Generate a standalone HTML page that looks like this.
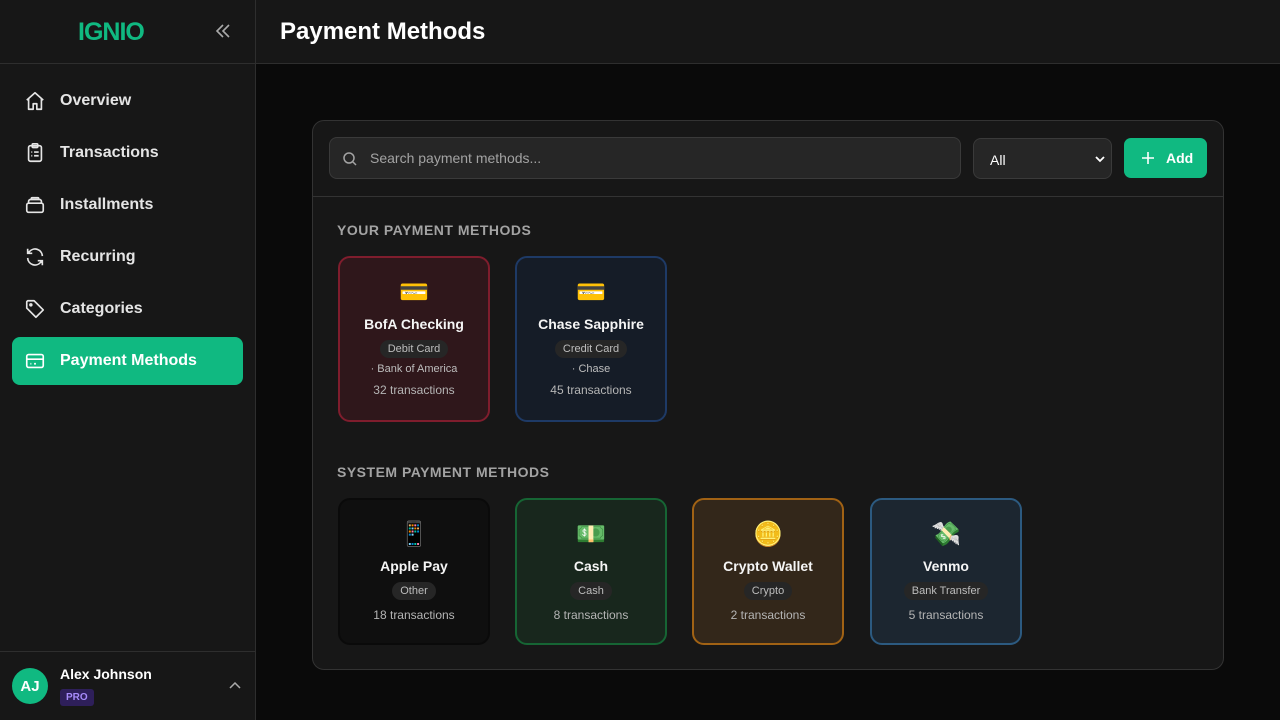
<!DOCTYPE html>
<html><head><meta charset="utf-8"><style>
*{box-sizing:border-box;margin:0;padding:0}
body{width:1280px;height:720px;background:#0a0a0a;font-family:"Liberation Sans",sans-serif;color:#fff;position:relative;overflow:hidden}
.side{position:absolute;left:0;top:0;width:256px;height:720px;background:#171717;border-right:1px solid #2e2e2e}
.logo{height:64px;border-bottom:1px solid #2e2e2e;position:relative}
.logo .l{position:absolute;left:78px;top:18px;color:#10b981;font-weight:900;font-size:25px;letter-spacing:-1px}
.logo .c{position:absolute;left:214px;top:22px}
.nav{padding-top:9px}
.item{position:relative;height:48px;margin:4px 12px;border-radius:8px;display:flex;align-items:center;padding-left:12px;font-size:16px;font-weight:bold;color:#e5e5e5}
.item svg{margin-right:14px}
.item.act{background:#10b981;color:#fff}
.user{position:absolute;left:0;bottom:0;width:255px;height:69px;border-top:1px solid #2e2e2e}
.av{position:absolute;left:12px;top:16px;width:36px;height:36px;border-radius:50%;background:#10b981;font-weight:bold;font-size:15px;display:flex;align-items:center;justify-content:center}
.un{position:absolute;left:60px;top:14px;font-size:14px;font-weight:bold}
.pro{position:absolute;left:60px;top:37px;background:#2e1f5a;color:#a78bfa;font-size:10px;font-weight:bold;padding:3px 6px;border-radius:3px}
.hdr{position:absolute;left:256px;top:0;right:0;height:64px;border-bottom:1px solid #2e2e2e;background:#171717}
.hdr h1{position:absolute;left:24px;top:18px;font-size:24px;font-weight:bold}
.panel{position:absolute;left:312px;top:120px;width:912px;height:550px;background:#171717;border:1px solid #333;border-radius:12px}
.bar{height:76px;border-bottom:1px solid #333;position:relative}
.search{position:absolute;left:16px;top:16px;width:632px;height:42px;background:#262626;border:1px solid #3a3a3a;border-radius:8px;color:#a3a3a3;font-size:14px;padding:12px 0 0 40px}
.search svg{position:absolute;left:12px;top:13px}
.sel{position:absolute;left:660px;top:17px;width:139px;height:41px;background:#262626;border:1px solid #3a3a3a;border-radius:8px;font-size:14px;padding:13px 0 0 16px}
.sel svg{position:absolute;right:6px;top:16px}
.add{position:absolute;left:811px;top:17px;width:83px;height:40px;background:#10b981;border-radius:7px;font-size:14px;font-weight:bold;padding:12px 0 0 42px}
.add svg{position:absolute;left:17px;top:13px}
.sec{position:absolute;left:24px;font-size:14px;font-weight:bold;color:#a3a3a3;letter-spacing:.5px}
.card{position:absolute;width:152px;border:2px solid;border-radius:12px;text-align:center}
.card .e{font-size:24px;margin-top:20px;height:30px;line-height:30px}
.card .n{font-size:14px;font-weight:bold;margin-top:8px;color:#f5f5f5}
.card .t{display:inline-block;background:#262626;color:#bdbdbd;font-size:11px;padding:3px 8px;border-radius:10px;margin-top:8px}
.card .b{font-size:11px;color:#bdbdbd;margin-top:5px}
.card .x{font-size:12px;color:#b5b5b5;margin-top:8px}
</style></head><body>
<div class="side">
<div class="logo"><span class="l">IGNIO</span>
<svg class="c" width="18" height="18" viewBox="0 0 18 18" fill="none" stroke="#aaa" stroke-width="1.6"><path d="M9 3L3 9l6 6M15 3L9 9l6 6"/></svg></div>
<div class="nav">
<div class="item"><svg width="22" height="22" viewBox="0 0 24 24" fill="none" stroke="#e5e5e5" stroke-width="1.8" stroke-linejoin="round"><path d="M3 11l9-8 9 8M5 9v12h5v-6h4v6h5V9"/></svg>Overview</div>
<div class="item"><svg width="22" height="22" viewBox="0 0 24 24" fill="none" stroke="#e5e5e5" stroke-width="1.8"><rect x="5" y="4" width="14" height="17" rx="2"/><rect x="9" y="2" width="6" height="4" rx="1"/><path d="M8 11h1M11 11h5M8 15h1M11 15h5"/></svg>Transactions</div>
<div class="item"><svg width="22" height="22" viewBox="0 0 24 24" fill="none" stroke="#e5e5e5" stroke-width="1.8"><rect x="3" y="10" width="18" height="10" rx="2"/><path d="M5 10V8a2 2 0 012-2h10a2 2 0 012 2v2M8 6V5a1 1 0 011-1h6a1 1 0 011 1v1"/></svg>Installments</div>
<div class="item"><svg width="22" height="22" viewBox="0 0 24 24" fill="none" stroke="#e5e5e5" stroke-width="1.8"><path d="M20 11a8 8 0 00-14-5L4 8M4 3v5h5M4 13a8 8 0 0014 5l2-2M20 21v-5h-5"/></svg>Recurring</div>
<div class="item"><svg width="22" height="22" viewBox="0 0 24 24" fill="none" stroke="#e5e5e5" stroke-width="1.8" stroke-linejoin="round"><path d="M3 4v7l10 10 8-8L11 3H4z"/><circle cx="7.5" cy="7.5" r="1"/></svg>Categories</div>
<div class="item act"><svg width="22" height="22" viewBox="0 0 24 24" fill="none" stroke="#fff" stroke-width="1.8"><rect x="3" y="5" width="18" height="14" rx="2"/><path d="M3 10h18M7 15h1M11 15h2"/></svg>Payment Methods</div>
</div>
<div class="user"><div class="av">AJ</div><div class="un">Alex Johnson</div><div class="pro">PRO</div>
<svg style="position:absolute;left:229px;top:30px" width="12" height="8" viewBox="0 0 12 8" fill="none" stroke="#aaa" stroke-width="1.5"><path d="M1 6l5-5 5 5"/></svg></div>
</div>
<div class="hdr"><h1>Payment Methods</h1></div>
<div class="panel">
<div class="bar">
<div class="search"><svg width="16" height="16" viewBox="0 0 16 16" fill="none" stroke="#a3a3a3" stroke-width="1.5"><circle cx="7" cy="7" r="5"/><path d="M11 11l3 3"/></svg>Search payment methods...</div>
<div class="sel">All<svg width="10" height="8" viewBox="0 0 10 8" fill="none" stroke="#fff" stroke-width="1.8"><path d="M1 2l4 4 4-4"/></svg></div>
<div class="add"><svg width="14" height="14" viewBox="0 0 14 14" stroke="#fff" stroke-width="1.6"><path d="M7 1v12M1 7h12"/></svg>Add</div>
</div>
<div class="sec" style="top:101px">YOUR PAYMENT METHODS</div>
<div class="card" style="left:25px;top:135px;height:166px;background:#2f171b;border-color:#7f1d2d"><div class="e">💳</div><div class="n">BofA Checking</div><div class="t">Debit Card</div><div class="b">· Bank of America</div><div class="x">32 transactions</div></div>
<div class="card" style="left:202px;top:135px;height:166px;background:#151c27;border-color:#1e3a66"><div class="e">💳</div><div class="n">Chase Sapphire</div><div class="t">Credit Card</div><div class="b">· Chase</div><div class="x">45 transactions</div></div>
<div class="sec" style="top:343px">SYSTEM PAYMENT METHODS</div>
<div class="card" style="left:25px;top:377px;height:147px;background:#0f0f0f;border-color:#0a0a0a"><div class="e">📱</div><div class="n">Apple Pay</div><div class="t">Other</div><div class="x">18 transactions</div></div>
<div class="card" style="left:202px;top:377px;height:147px;background:#18271d;border-color:#166534"><div class="e">💵</div><div class="n">Cash</div><div class="t">Cash</div><div class="x">8 transactions</div></div>
<div class="card" style="left:379px;top:377px;height:147px;background:#33271a;border-color:#a16214"><div class="e">🪙</div><div class="n">Crypto Wallet</div><div class="t">Crypto</div><div class="x">2 transactions</div></div>
<div class="card" style="left:557px;top:377px;height:147px;background:#1c2630;border-color:#2c5a80"><div class="e">💸</div><div class="n">Venmo</div><div class="t">Bank Transfer</div><div class="x">5 transactions</div></div>
</div>
</body></html>
